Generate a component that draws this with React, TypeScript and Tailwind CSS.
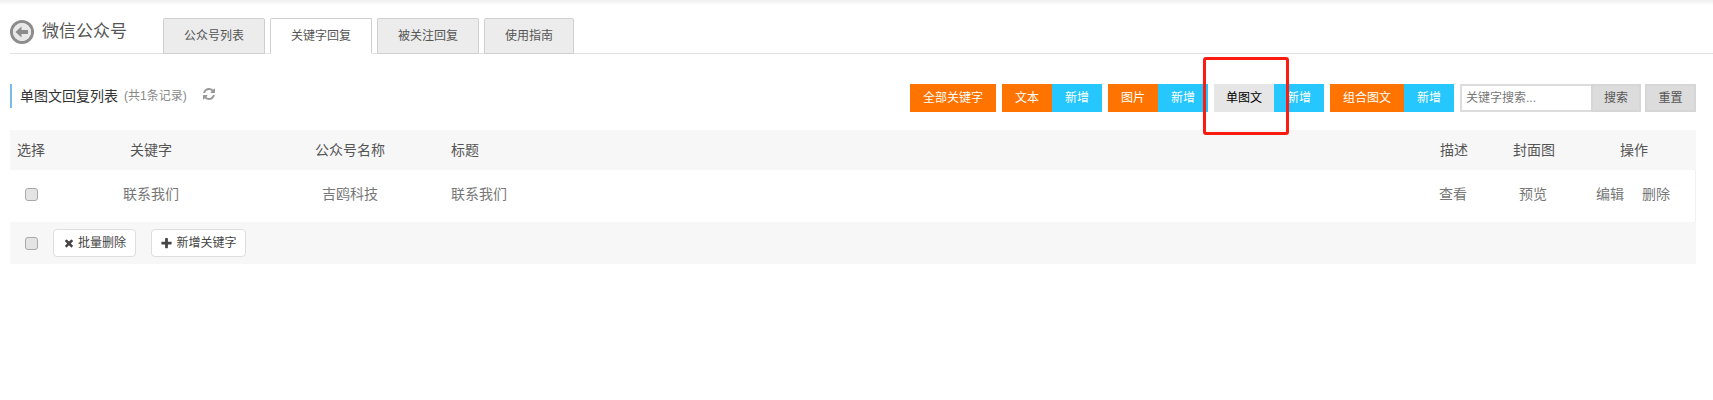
function Orange({ w, children }: { w: string; children: string }) {
  return <span className={`flex h-full items-center justify-center bg-[#ff7300] text-white ${w}`}>{children}</span>;
}
function Add() {
  return <span className="flex h-full w-[50px] items-center justify-center bg-[#26c6fe] text-white">新增</span>;
}
function Check() {
  return <span className="block h-[13px] w-[13px] rounded-[3px] border border-[#a9a9a9] bg-[#e4e4e4]" />;
}
function Fa({ d, className }: { d: string; className: string }) {
  return (
    <svg viewBox="0 0 1792 1792" fill="currentColor" className={className}>
      <path d={d} />
    </svg>
  );
}
const REFRESH =
  "M1639 1056q0 5-1 7-64 268-268 434.5t-478 166.5q-146 0-282.5-55t-243.5-157l-129 129q-19 19-45 19t-45-19-19-45v-448q0-26 19-45t45-19h448q26 0 45 19t19 45-19 45l-137 137q71 66 161 102t187 36q134 0 250-65t186-179q11-17 53-117 8-23 30-23h192q13 0 22.5 9.5t9.5 22.5zm25-800v448q0 26-19 45t-45 19h-448q-26 0-45-19t-19-45 19-45l138-138q-148-137-349-137-134 0-250 65t-186 179q-11 17-53 117-8 23-30 23h-199q-13 0-22.5-9.5t-9.5-22.5v-7q65-268 270-434.5t480-166.5q146 0 284 55.5t245 156.5l130-129q19-19 45-19t45 19 19 45z";
const TIMES =
  "M1490 1322q0 40-28 68l-136 136q-28 28-68 28t-68-28l-294-294-294 294q-28 28-68 28t-68-28l-136-136q-28-28-28-68t28-68l294-294-294-294q-28-28-28-68t28-68l136-136q28-28 68-28t68 28l294 294 294-294q28-28 68-28t68 28l136 136q28 28 28 68t-28 68l-294 294 294 294q28 28 28 68z";
const PLUS =
  "M1600 736v192q0 40-28 68t-68 28h-416v416q0 40-28 68t-68 28h-192q-40 0-68-28t-28-68v-416h-416q-40 0-68-28t-28-68v-192q0-40 28-68t68-28h416v-416q0-40 28-68t68-28h192q40 0 68 28t28 68v416h416q40 0 68 28t28 68z";

export default function App() {
  return (
    <div className="relative h-[400px] w-[1713px] overflow-hidden bg-white font-['Liberation_Sans','Noto_Sans_CJK_SC',sans-serif] text-[12px] text-[#555]">
      <div className="h-[5px] bg-gradient-to-b from-[#eeeeee] to-white" />

      {/* page title and tabs */}
      <div className="ml-[10px] mt-[13px] flex h-[36px] items-start border-b border-[#e2e2e2]">
        <div className="flex w-[153px] items-center pt-[2px]">
          <svg viewBox="0 0 24 24" className="h-[24px] w-[24px]">
            <circle cx="12" cy="12" r="10.5" fill="none" stroke="#8c8c8c" strokeWidth="3" />
            <circle cx="12" cy="12" r="9" fill="#e8e8e8" />
            <path d="M5.5 12 L11.5 6.5 V10 H18 V14 H11.5 V17.5 Z" fill="#8c8c8c" />
          </svg>
          <span className="ml-[8px] text-[17px] leading-[24px] text-[#555]">微信公众号</span>
        </div>
        <div className="flex gap-[5px]">
          {["公众号列表", "关键字回复", "被关注回复", "使用指南"].map((t, i) => (
            <div
              key={t}
              className={`flex h-[36px] items-center justify-center rounded-t-[2px] border border-[#cfcfcf] ${
                i === 3 ? "w-[90px]" : "w-[102px]"
              } ${i === 1 ? "border-b-white bg-white" : "bg-[#ececec]"}`}
            >
              {t}
            </div>
          ))}
        </div>
      </div>

      {/* toolbar */}
      <div className="mt-[30px] flex h-[28px] items-start justify-between pl-[10px] pr-[17px]">
        <div className="flex h-[24px] items-center border-l-2 border-[#7cbbe8] pl-[8px]">
          <span className="text-[14px] text-[#333]">单图文回复列表</span>
          <span className="ml-[6px] text-[12px] text-[#888]">(共1条记录)</span>
          <Fa d={REFRESH} className="relative -top-[2px] ml-[15px] h-[14px] w-[14px] text-[#999]" />
        </div>
        <div className="flex h-[28px] items-stretch">
          <Orange w="w-[86px]">全部关键字</Orange>
          <div className="ml-[6px] flex">
            <Orange w="w-[50px]">文本</Orange>
            <Add />
          </div>
          <div className="ml-[6px] flex">
            <Orange w="w-[50px]">图片</Orange>
            <Add />
          </div>
          <div className="ml-[6px] flex">
            <span className="flex w-[60px] items-center justify-center bg-[#e6e6e6] text-black">单图文</span>
            <Add />
          </div>
          <div className="ml-[6px] flex">
            <Orange w="w-[74px]">组合图文</Orange>
            <Add />
          </div>
          <div className="ml-[6px] flex">
            <input
              readOnly
              placeholder="关键字搜索..."
              className="w-[131px] border-2 border-r-0 border-[#dcdcdc] bg-white px-[4px] text-[12px] placeholder:text-[#777] outline-none"
            />
            <span className="flex w-[50px] items-center justify-center border-2 border-[#d6d6d6] bg-[#dcdcdc]">搜索</span>
          </div>
          <span className="ml-[4px] flex w-[51px] items-center justify-center border-2 border-[#d6d6d6] bg-[#dcdcdc]">重置</span>
        </div>
      </div>

      {/* table */}
      <div className="ml-[10px] mt-[18px] w-[1686px] text-[14px]">
        <div className="grid h-[40px] grid-cols-[43px_196px_202px_1fr_84px_76px_124px] items-center bg-[#f7f7f7] text-[#555]">
          <span className="pl-[7px]">选择</span>
          <span className="text-center">关键字</span>
          <span className="text-center">公众号名称</span>
          <span>标题</span>
          <span className="text-center">描述</span>
          <span className="text-center">封面图</span>
          <span className="text-center">操作</span>
        </div>
        <div className="grid h-[52px] grid-cols-[43px_196px_202px_1fr_84px_76px_124px] items-center border-r border-[#f2f2f2] pb-[3px] text-[#777]">
          <span className="pl-[15px]"><Check /></span>
          <span className="text-center">联系我们</span>
          <span className="text-center">吉鸥科技</span>
          <span>联系我们</span>
          <span className="text-center">查看</span>
          <span className="text-center">预览</span>
          <span className="flex justify-center gap-[18px]">
            <span>编辑</span>
            <span>删除</span>
          </span>
        </div>
        <div className="flex h-[42px] items-center bg-[#f7f7f7] pl-[15px] text-[12px] text-[#444]">
          <Check />
          <button className="ml-[15px] flex h-[28px] w-[83px] items-center justify-center gap-[3px] rounded-[4px] border border-[#dedede] bg-white">
            <Fa d={TIMES} className="h-[12px] w-[12px] text-[#444]" />
            批量删除
          </button>
          <button className="ml-[15px] flex h-[28px] w-[95px] items-center justify-center gap-[3px] rounded-[4px] border border-[#dedede] bg-white">
            <Fa d={PLUS} className="h-[13px] w-[13px] text-[#444]" />
            新增关键字
          </button>
        </div>
      </div>

      {/* annotation drawn over the screenshot */}
      <div className="absolute left-[1203px] top-[57px] h-[78px] w-[86px] rounded-[3px] border-[3px] border-[#fb1b10]" />
    </div>
  );
}
